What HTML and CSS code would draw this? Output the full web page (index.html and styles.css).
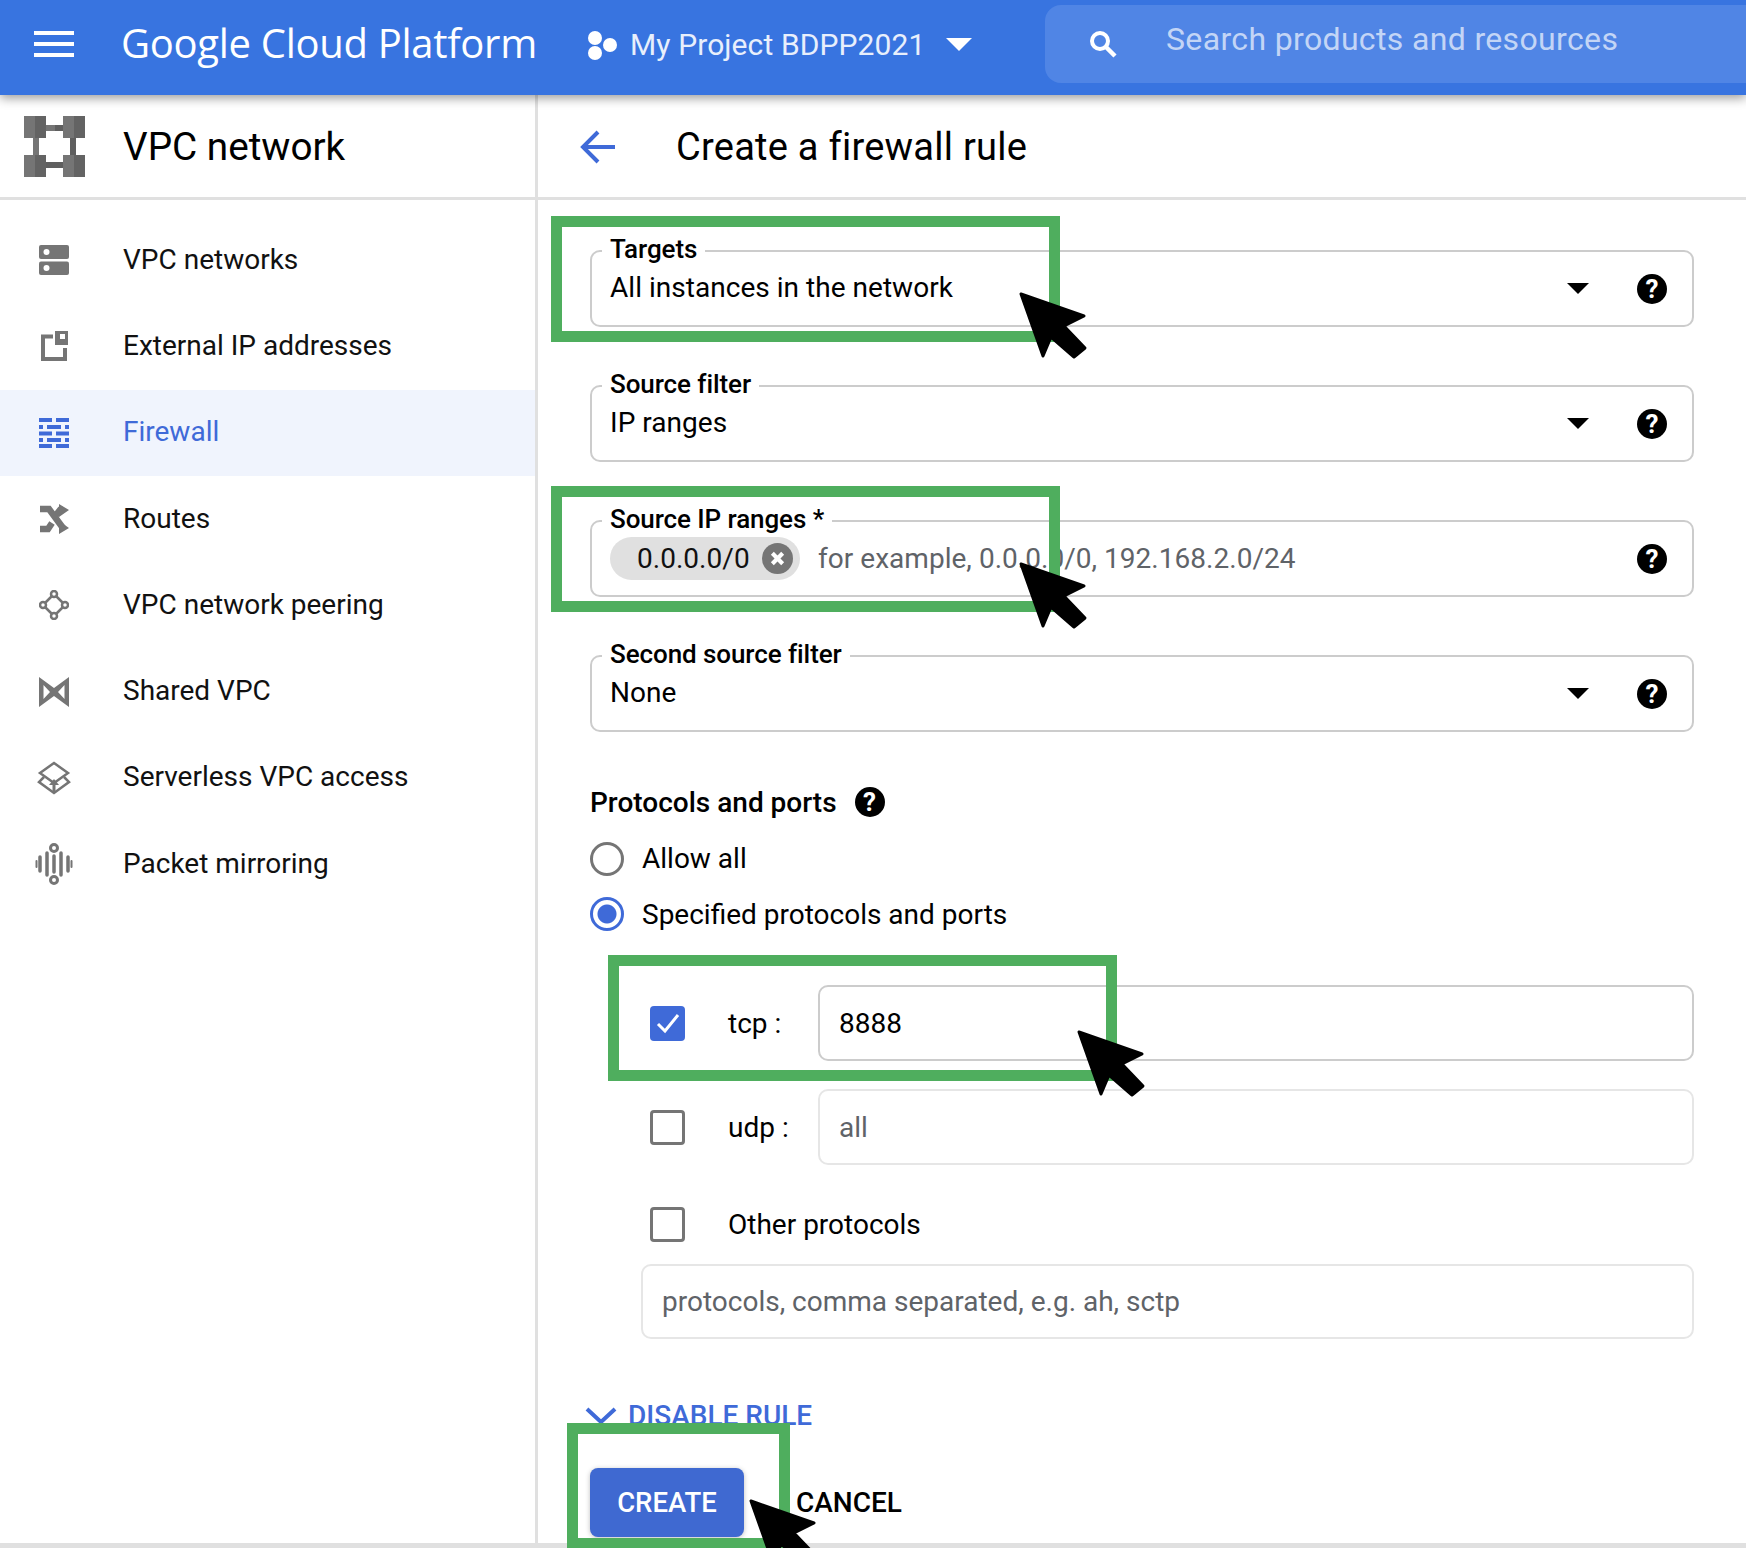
FILE: index.html
```html
<!DOCTYPE html>
<html lang="en">
<head>
    <meta charset="UTF-8">
    <title>Create a firewall rule</title>
    <link rel="stylesheet" href="styles.css">
</head>
<body>
    <svg class="defs" width="0" height="0">
        <symbol id="arrow-cursor" viewBox="0 0 72 70">
            <path d="M3 3 L66 25 L46 35 L67 57 L56 66 L33 46 L25 65 Z" fill="#000" stroke="#000" stroke-width="3" stroke-linejoin="round"/>
        </symbol>
    </svg>

    <!-- Top bar -->
    <header class="topbar">
        <svg class="menu-icon" width="40" height="26" viewBox="0 0 40 26"><path d="M0 0h40v4H0zM0 11h40v4H0zM0 22h40v4H0z" fill="#fff"/></svg>
        <div class="brand">Google Cloud Platform</div>
        <div class="project">
            <svg class="project-icon" width="31" height="30" viewBox="0 0 31 30"><circle cx="9" cy="8" r="7" fill="#fff"/><circle cx="24" cy="15" r="7" fill="#fff"/><circle cx="9" cy="23" r="7" fill="#fff"/></svg>
            <span class="project-name">My Project BDPP2021</span>
            <span class="project-caret"></span>
        </div>
        <div class="search">
            <svg class="search-icon" width="30" height="30" viewBox="0 0 30 30"><circle cx="12" cy="12" r="8" fill="none" stroke="#fff" stroke-width="4"/><path d="M18 18 L27 27" stroke="#fff" stroke-width="4.5"/></svg>
            <span class="search-text">Search products and resources</span>
        </div>
    </header>

    <div class="layout">
        <!-- Sidebar -->
        <aside class="sidebar">
            <div class="side-head">
                <svg class="vpc-logo" width="61" height="61" viewBox="0 0 61 61">
                    <path d="M22 9h9v6h-9zM9 22h6v17H9z" fill="#757575"/>
                    <path d="M31 9h8v6h-8zM46 22h6v17h-6zM22 46h17v6H22z" fill="#5f5f5f"/>
                    <path d="M0 0h11v22H0zM39 0h11v22H39zM0 39h11v22H0zM39 39h11v22H39z" fill="#757575"/>
                    <path d="M11 0h11v22H11zM50 0h11v22H50zM11 39h11v22H11zM50 39h11v22H50z" fill="#636363"/>
                </svg>
                <span class="side-title">VPC network</span>
            </div>
            <nav class="nav">
                <a class="nav-item">
                    <svg class="nav-icon" viewBox="0 0 30 30"><rect y="0" width="30" height="14" rx="2" fill="#757575"/><rect y="16.500" width="30" height="13.500" rx="2" fill="#757575"/><circle cx="7.500" cy="7" r="3" fill="#fff"/><circle cx="7.500" cy="23" r="3" fill="#fff"/></svg>
                    VPC networks
                </a>
                <a class="nav-item">
                    <svg class="nav-icon" viewBox="0 0 30 30"><path d="M14 5.500H4V28H26V17" fill="none" stroke="#757575" stroke-width="4"/><rect x="16" y="0" width="13" height="14" fill="#757575"/><rect x="21" y="3" width="5" height="5" fill="#fff"/></svg>
                    External IP addresses
                </a>
                <a class="nav-item nav-active">
                    <svg class="nav-icon" viewBox="0 0 30 30"><path d="M0 0h13v4H0zM17 0h13v4H17zM0 7h4v4H0zM8 7h14v4H8zM26 7h4v4h-4zM0 13.500h13v4H0zM17 13.500h13v4H17zM0 20h4v4H0zM8 20h14v4H8zM26 20h4v4h-4zM0 26h13v4H0zM17 26h13v4H17z" fill="#3f6ad8"/></svg>
                    Firewall
                </a>
                <a class="nav-item">
                    <svg class="nav-icon" viewBox="0 0 30 30"><path d="M1 5 L10 5 L24 24M1 25 L9 25 L13 19M17 11 L21 6 L24 6" fill="none" stroke="#757575" stroke-width="6.500"/><path d="M20 0 L30 6 L20 13ZM20 17 L30 24 L20 30Z" fill="#757575"/></svg>
                    Routes
                </a>
                <a class="nav-item">
                    <svg class="nav-icon" viewBox="0 0 30 30" fill="none" stroke="#757575" stroke-width="2.500"><circle cx="15" cy="4" r="3"/><circle cx="4" cy="15" r="3"/><circle cx="26" cy="15" r="3"/><circle cx="15" cy="26" r="3"/><path d="M12.500 6.500 L6.500 12.500M17.500 6.500 L23.500 12.500M6.500 17.500 L12.500 23.500M23.500 17.500 L17.500 23.500"/></svg>
                    VPC network peering
                </a>
                <a class="nav-item">
                    <svg class="nav-icon" viewBox="0 0 30 30"><path d="M0 0 L15 11 L30 0 V30 L15 19 L0 30 Z M4.500 8 V22 L11 15 Z M25.500 8 L19 15 L25.500 22 Z" fill="#757575" fill-rule="evenodd"/></svg>
                    Shared VPC
                </a>
                <a class="nav-item">
                    <svg class="nav-icon nav-icon-wide" viewBox="0 0 34 34" fill="none" stroke="#757575" stroke-width="2.500"><path d="M17 2 L31 12 L17 22 L3 12 Z"/><path d="M7 16 L2 21 L17 32 L32 21 L27 16"/><path d="M17 32 V20" stroke-width="3"/><path d="M12 24 L17 18 L22 24 Z" fill="#757575" stroke="none"/></svg>
                    Serverless VPC access
                </a>
                <a class="nav-item">
                    <svg class="nav-icon nav-icon-tall" viewBox="0 0 38 42" fill="none" stroke="#757575" stroke-width="3.500" stroke-linecap="round"><circle cx="19" cy="5" r="3.500" stroke-width="3"/><circle cx="19" cy="37" r="3.500" stroke-width="3"/><path d="M19 13 V29M12 10 V32M26 10 V32M5 14 V28M33 14 V28" /><path d="M1.500 18 V24M36.500 18 V24" stroke-width="2"/></svg>
                    Packet mirroring
                </a>
            </nav>
        </aside>

        <!-- Main column -->
        <main class="main">
            <div class="page-head">
                <svg class="back-icon" width="36" height="34" viewBox="0 0 36 34"><path d="M35 17 H4 M18 2 L3 17 L18 32" fill="none" stroke="#3f6ad8" stroke-width="4"/></svg>
                <h1 class="page-title">Create a firewall rule</h1>
            </div>

            <form class="rule-form">
                <div class="field">
                    <span class="field-label">Targets</span>
                    <span class="field-value">All instances in the network</span>
                    <span class="select-caret"></span>
                    <span class="help">?</span>
                </div>
                <div class="field">
                    <span class="field-label">Source filter</span>
                    <span class="field-value">IP ranges</span>
                    <span class="select-caret"></span>
                    <span class="help">?</span>
                </div>
                <div class="field">
                    <span class="field-label">Source IP ranges *</span>
                    <span class="chip">0.0.0.0/0
                        <svg class="chip-x" width="31" height="31" viewBox="0 0 30 30"><circle cx="15" cy="15" r="15" fill="#757575"/><path d="M10 10 L20 20M20 10 L10 20" stroke="#fff" stroke-width="4"/></svg>
                    </span>
                    <span class="field-hint">for example, 0.0.0.0/0, 192.168.2.0/24</span>
                    <span class="help help-end">?</span>
                </div>
                <div class="field field-last">
                    <span class="field-label">Second source filter</span>
                    <span class="field-value">None</span>
                    <span class="select-caret"></span>
                    <span class="help">?</span>
                </div>

                <div class="section-head">
                    <span class="section-title">Protocols and ports</span>
                    <span class="help">?</span>
                </div>

                <div class="radio-row radio-first"><span class="radio"></span>Allow all</div>
                <div class="radio-row"><span class="radio radio-on"></span>Specified protocols and ports</div>

                <div class="proto-row proto-tcp">
                    <span class="check check-on">
                        <svg width="26" height="24" viewBox="0 0 26 24"><path d="M3 13 L10 20 L23 4" fill="none" stroke="#fff" stroke-width="3"/></svg>
                    </span>
                    <span class="proto-name">tcp :</span>
                    <div class="port-box">8888</div>
                </div>
                <div class="proto-row proto-udp">
                    <span class="check"></span>
                    <span class="proto-name">udp :</span>
                    <div class="port-box port-off">all</div>
                </div>
                <div class="proto-row proto-other">
                    <span class="check"></span>
                    <span class="proto-name">Other protocols</span>
                </div>
                <div class="port-box port-off other-box">protocols, comma separated, e.g. ah, sctp</div>

                <div class="disable-link">
                    <svg width="32" height="18" viewBox="0 0 32 18"><path d="M2 2 L16 15 L30 2" fill="none" stroke="#3f6ad8" stroke-width="4"/></svg>
                    <span>DISABLE RULE</span>
                </div>
                <div class="actions">
                    <button class="btn-create" type="button">CREATE</button>
                    <span class="btn-cancel">CANCEL</span>
                </div>
            </form>
        </main>
    </div>
    <div class="bottom-line"></div>

    <!-- Annotations drawn over the screenshot -->
    <div class="mark mark-targets"></div>
    <div class="mark mark-source"></div>
    <div class="mark mark-tcp"></div>
    <div class="mark mark-create"></div>
    <svg class="cursor cursor-targets"><use href="#arrow-cursor"/></svg>
    <svg class="cursor cursor-source"><use href="#arrow-cursor"/></svg>
    <svg class="cursor cursor-tcp"><use href="#arrow-cursor"/></svg>
    <svg class="cursor cursor-create"><use href="#arrow-cursor"/></svg>
</body>
</html>
```

FILE: styles.css
```css
* {
    box-sizing: border-box;
}

body {
    margin: 0;
    width: 1746px;
    height: 1548px;
    position: relative;
    overflow: hidden;
    display: flex;
    flex-direction: column;
    background: #fff;
    color: #000;
    font-family: Roboto, "Liberation Sans", sans-serif;
}

.defs {
    position: absolute;
}

/* top bar */
.topbar {
    height: 95px;
    flex: none;
    display: flex;
    align-items: center;
    background: #3874e0;
    box-shadow: 0 3px 10px rgba(0, 0, 0, 0.4);
    position: relative;
    z-index: 2;
    color: #fff;
}

.menu-icon {
    margin-left: 34px;
    margin-top: -8px;
}

.brand {
    margin-left: 47px;
    width: 465px;
    font-family: "Open Sans", Roboto, sans-serif;
    font-size: 40px;
    letter-spacing: -0.3px;
    margin-top: -11px;
    white-space: nowrap;
}

.project {
    display: flex;
    align-items: center;
    width: 459px;
    margin-top: -6px;
}

.project-icon {
    flex: none;
}

.project-name {
    margin-left: 13px;
    font-size: 30px;
    letter-spacing: 0.1px;
    color: #e8effc;
    white-space: nowrap;
}

.project-caret {
    margin-left: 21px;
    border-left: 13px solid transparent;
    border-right: 13px solid transparent;
    border-top: 13px solid #fff;
}

.search {
    height: 78px;
    flex: 1;
    align-self: flex-start;
    margin-top: 5px;
    display: flex;
    align-items: center;
    background: #5085e5;
    border-radius: 16px 0 0 16px;
}

.search-icon {
    margin-left: 43px;
    flex: none;
}

.search-text {
    margin-left: 48px;
    margin-top: -10px;
    font-size: 32px;
    letter-spacing: 0.35px;
    color: #c3d5f6;
    white-space: nowrap;
}

/* page below the bar */
.layout {
    flex: 1;
    display: flex;
    min-height: 0;
}

.sidebar {
    width: 538px;
    flex: none;
    border-right: 3px solid #e0e0e0;
}

.side-head {
    height: 105px;
    display: flex;
    align-items: center;
    padding-left: 24px;
    padding-top: 2px;
    border-bottom: 3px solid #e0e0e0;
}

.side-title {
    margin-left: 38px;
    margin-top: -1px;
    font-size: 38.7px;
    white-space: nowrap;
}

.vpc-logo {
    margin-top: -2px;
}

.nav {
    padding-top: 17px;
}

.nav-item {
    height: 86.3px;
    display: flex;
    align-items: center;
    padding-bottom: 2px;
    font-size: 28px;
    color: #111;
}

.nav-active {
    background: #f0f4fd;
    color: #3f6ad8;
}

.nav-icon {
    width: 30px;
    height: 30px;
    flex: none;
    margin-left: 39px;
    margin-right: 54px;
    margin-top: 2px;
}

.nav-icon-wide {
    width: 34px;
    height: 34px;
    margin-left: 37px;
    margin-right: 52px;
}

.nav-icon-tall {
    width: 38px;
    height: 42px;
    margin-left: 35px;
    margin-right: 50px;
}

.main {
    flex: 1;
    min-width: 0;
}

.page-head {
    height: 105px;
    display: flex;
    align-items: center;
    padding-left: 42px;
    padding-top: 2px;
    border-bottom: 3px solid #e0e0e0;
}

.page-title {
    margin: 0 0 0 60px;
    font-size: 38px;
    font-weight: 400;
    letter-spacing: 0.25px;
    white-space: nowrap;
}

.rule-form {
    padding: 50px 52px 0 52px;
}

/* outlined fields */
.field {
    height: 77px;
    margin-bottom: 58px;
    position: relative;
    display: flex;
    align-items: center;
    padding: 0 18px;
    border: 2px solid #ccc;
    border-radius: 10px;
    font-size: 28px;
    letter-spacing: 0.03px;
}

.field-last {
    margin-bottom: 0;
}

.field-label {
    position: absolute;
    left: 10px;
    top: -21px;
    padding: 0 8px 0 8px;
    background: #fff;
    font-size: 26px;
    font-weight: 500;
    letter-spacing: -0.08px;
    line-height: 36px;
    white-space: nowrap;
}

.field-value {
    flex: 1;
    margin-top: -2px;
    white-space: nowrap;
}

.select-caret {
    margin-right: 48px;
    border-left: 11px solid transparent;
    border-right: 11px solid transparent;
    border-top: 11px solid #000;
}

.help {
    width: 30px;
    height: 30px;
    flex: none;
    display: flex;
    align-items: center;
    justify-content: center;
    margin-right: 7px;
    border-radius: 50%;
    background: #000;
    color: #fff;
    font-size: 26px;
    font-weight: 700;
    letter-spacing: 0;
}

.help-end {
    margin-left: auto;
}

.chip {
    height: 43px;
    width: 190px;
    flex: none;
    display: flex;
    align-items: center;
    padding-left: 27px;
    border-radius: 22px;
    background: #e0e0e0;
    color: #111;
    white-space: nowrap;
}

.chip-x {
    flex: none;
    margin-left: auto;
    margin-right: 7px;
}

.field-hint {
    margin-left: 18px;
    color: #5f6368;
    white-space: nowrap;
}

/* protocols */
.section-head {
    display: flex;
    align-items: center;
    gap: 18px;
    height: 40px;
    margin-top: 50px;
}

.section-title {
    font-size: 28px;
    font-weight: 500;
    white-space: nowrap;
}

.radio-row {
    height: 55.5px;
    display: flex;
    align-items: center;
    font-size: 28px;
}

.radio-first {
    margin-top: 9px;
}

.radio {
    width: 34px;
    height: 34px;
    flex: none;
    margin-right: 18px;
    border: 3px solid #757575;
    border-radius: 50%;
}

.radio-on {
    border-color: #3f6ad8;
    background: radial-gradient(circle, #3f6ad8 0 9px, #fff 10px);
}

.proto-row {
    display: flex;
    align-items: center;
    padding-left: 60px;
    font-size: 28px;
}

.proto-tcp {
    margin-top: 43px;
}

.proto-udp {
    margin-top: 28px;
}

.proto-other {
    height: 36px;
    margin-top: 41px;
}

.check {
    width: 35px;
    height: 35px;
    flex: none;
    display: flex;
    align-items: center;
    justify-content: center;
    margin-right: 43px;
    border: 3px solid #757575;
    border-radius: 4px;
}

.check-on {
    border: none;
    background: #3f6ad8;
}

.proto-name {
    width: 90px;
    white-space: nowrap;
}

.port-box {
    flex: 1;
    height: 76px;
    display: flex;
    align-items: center;
    padding-left: 19px;
    border: 2px solid #ccc;
    border-radius: 10px;
    font-size: 28px;
}

.port-off {
    border-color: #e6e6e6;
    color: #5f6368;
}

.other-box {
    height: 75px;
    margin: 22px 0 0 51px;
}

.disable-link {
    display: flex;
    align-items: center;
    gap: 11px;
    margin-top: 60px;
    margin-left: -5px;
    font-size: 28px;
    font-weight: 500;
    color: #3f6ad8;
    line-height: 34px;
}

.actions {
    display: flex;
    align-items: center;
    margin-top: 35px;
}

.btn-create {
    width: 154px;
    height: 69px;
    border: none;
    border-radius: 8px;
    background: #3f69d1;
    color: #fff;
    font-family: inherit;
    font-size: 27.5px;
    font-weight: 500;
    box-shadow: 0 1px 5px rgba(0, 0, 0, 0.25);
}

.btn-cancel {
    margin-left: 52px;
    font-size: 28px;
    font-weight: 500;
}

.bottom-line {
    position: absolute;
    left: 0;
    right: 0;
    bottom: 0;
    height: 5px;
    background: #e0e0e0;
}

/* green boxes and arrows laid over the screenshot */
.mark {
    position: absolute;
    border: 11px solid #4fae5e;
}

.mark-targets {
    left: 551px;
    top: 216px;
    width: 509px;
    height: 126px;
}

.mark-source {
    left: 551px;
    top: 486px;
    width: 509px;
    height: 126px;
}

.mark-tcp {
    left: 608px;
    top: 955px;
    width: 509px;
    height: 126px;
}

.mark-create {
    left: 567px;
    top: 1423px;
    width: 223px;
    height: 126px;
}

.cursor {
    position: absolute;
    width: 72px;
    height: 70px;
}

.cursor-targets {
    left: 1018px;
    top: 291px;
}

.cursor-source {
    left: 1018px;
    top: 561px;
}

.cursor-tcp {
    left: 1076px;
    top: 1029px;
}

.cursor-create {
    left: 748px;
    top: 1498px;
}
```
